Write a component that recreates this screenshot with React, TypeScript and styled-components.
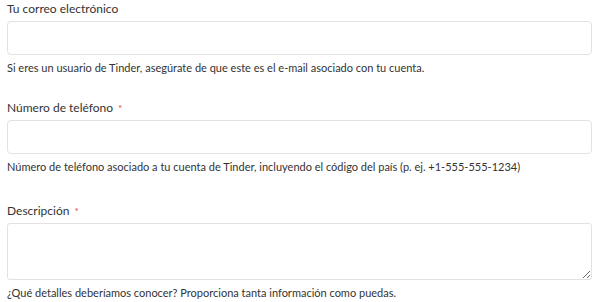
import React from 'react'
import styled, { createGlobalStyle } from 'styled-components'

const GlobalStyle = createGlobalStyle`
  body {
    margin: 0;
    background: #fff;
    font-family: Lato, "Liberation Sans", sans-serif;
    color: #333;
  }
`

interface FieldProps {
  readonly gap?: number
}

interface FieldData {
  id: string
  label: string
  required?: boolean
  help: string
  multiline?: boolean
  gap: number
}

const FIELDS: FieldData[] = [
  {
    id: 'email',
    label: 'Tu correo electrónico',
    help: 'Si eres un usuario de Tinder, asegúrate de que este es el e-mail asociado con tu cuenta.',
    gap: 1,
  },
  {
    id: 'phone',
    label: 'Número de teléfono',
    required: true,
    help: 'Número de teléfono asociado a tu cuenta de Tinder, incluyendo el código del país (p. ej. +1-555-555-1234)',
    gap: 24,
  },
  {
    id: 'description',
    label: 'Descripción',
    required: true,
    help: '¿Qué detalles deberíamos conocer? Proporciona tanta información como puedas.',
    multiline: true,
    gap: 28,
  },
]

const App: React.FC = () => {
  return (
    <>
      <GlobalStyle />
      <StyledForm>
        {FIELDS.map((f) => (
          <StyledField key={f.id} gap={f.gap}>
            <StyledLabel htmlFor={f.id}>
              {f.label}
              {f.required && <StyledRequired>*</StyledRequired>}
            </StyledLabel>
            {f.multiline ? (
              <StyledTextArea id={f.id} />
            ) : (
              <StyledInput id={f.id} type='text' />
            )}
            <StyledHelp>{f.help}</StyledHelp>
          </StyledField>
        ))}
      </StyledForm>
    </>
  )
}

const StyledForm = styled.form`
  display: flex;
  flex-direction: column;
  padding: 0 8px 0 7px;
`

const StyledField = styled.div<FieldProps>`
  display: flex;
  flex-direction: column;
  margin-top: ${(props) => props.gap ?? 0}px;
`

const StyledLabel = styled.label`
  font-size: 12px;
  line-height: 16px;
  color: #333;
  margin-bottom: 4px;
`

const StyledRequired = styled.span`
  color: #e4463f;
  font-size: 10px;
  margin-left: 5px;
  vertical-align: top;
`

const StyledInput = styled.input`
  box-sizing: border-box;
  height: 34px;
  width: 100%;
  border: 1px solid #e2e2e2;
  border-radius: 4px;
  background: #fff;
  padding: 0 10px;
  font: inherit;
  outline: none;
`

const StyledTextArea = styled.textarea`
  box-sizing: border-box;
  display: block;
  height: 57px;
  width: 100%;
  border: 1px solid #e2e2e2;
  border-radius: 3px;
  background: #fff;
  padding: 6px 10px;
  font: inherit;
  outline: none;
`

const StyledHelp = styled.p`
  margin: 5px 0 0;
  font-size: 11px;
  line-height: 16px;
  color: #333;
`

export default App
